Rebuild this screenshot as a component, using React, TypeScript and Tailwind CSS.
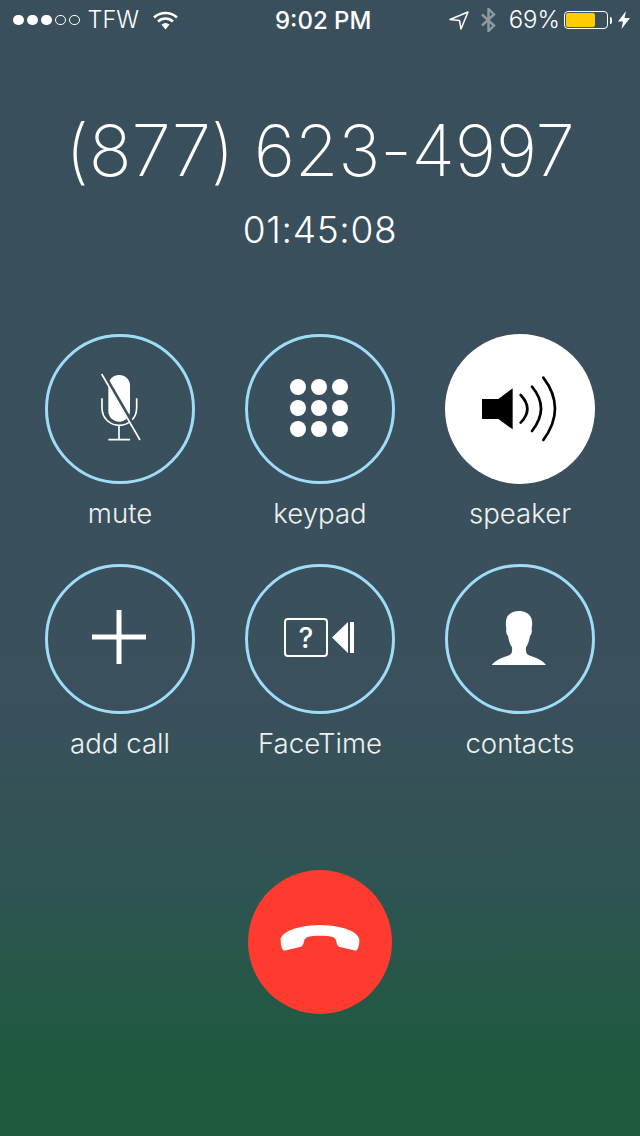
import React from "react";

const font = "font-['Inter','Liberation_Sans',sans-serif]";

const MicIcon = () => (
  <svg className="shrink-0" width="150" height="150" viewBox="15 12 450 450">
    <rect x="205" y="135" width="65" height="140" rx="32" fill="#fff" />
    <path d="M186 205v28c0 32 24 53 52 53s52-21 52-53v-28M237 286v42M205 329h65" fill="none" stroke="#fff" strokeWidth="5" />
    <path d="M190 132L305 330" stroke="#3a4f5c" strokeWidth="12" />
    <path d="M185 132L300 330" stroke="#fff" strokeWidth="5" />
  </svg>
);

const SpeakerIcon = () => (
  <svg className="shrink-0" width="150" height="150" viewBox="15 12 450 450">
    <path d="M126 207H175L218 175V298L175 267H126Z" fill="#000" />
    <path d="M242 195Q282 237 242 278M276 170Q330 235 276 303M310 143Q380 235 310 330" fill="none" stroke="#000" strokeWidth="8" strokeLinecap="round" />
  </svg>
);

const PlusIcon = () => (
  <svg className="mb-[4px] mr-[2px] shrink-0" width="54" height="54" viewBox="0 0 54 54">
    <path d="M0 27H54M27 0V54" stroke="#fff" strokeWidth="5" />
  </svg>
);

const FaceTimeIcon = () => (
  <div className="mb-[3px] mr-[2px] flex items-center gap-[4px]">
    <div className={`flex h-[39px] w-[44px] items-center justify-center rounded-[4px] border-2 border-white text-[28px] font-medium text-white ${font}`}>
      ?
    </div>
    <svg width="22" height="31" viewBox="0 0 22 31">
      <path d="M0 15.5L16 0V31ZM18 0H22V31H18Z" fill="#fff" />
    </svg>
  </div>
);

const ContactIcon = () => (
  <svg className="shrink-0" width="150" height="150" viewBox="15 12 450 450">
    <path
      d="M155 315C168 296 195 292 210 284C216 280 217 272 216 262C210 254 206 240 204 228C198 222 198 212 199 205C197 195 197 185 199 178C203 160 222 153 237 153C252 153 271 160 275 178C277 185 277 195 275 205C276 212 276 222 270 228C268 240 264 254 258 262C257 272 258 280 264 284C279 292 306 296 318 315Z"
      fill="#fff"
    />
  </svg>
);

const Keypad = () => (
  <div className="mb-[2px] mr-[2px] grid grid-cols-3 gap-[5px]">
    {Array.from({ length: 9 }).map((_, i) => (
      <div key={i} className="h-[16px] w-[16px] rounded-full bg-white" />
    ))}
  </div>
);

const CallButton = ({ label, active, children }: { label: string; active?: boolean; children: React.ReactNode }) => (
  <div className="flex flex-col items-center">
    <div
      className={`flex h-[150px] w-[150px] items-center justify-center rounded-full ${
        active ? "bg-white" : "border-[3px] border-[#9fdcf8]"
      }`}
    >
      {children}
    </div>
    <span className="h-[60px] whitespace-nowrap text-[27.6px] font-light leading-[58px] text-[#eef1f2]">{label}</span>
  </div>
);

const StatusBar = () => (
  <div className="relative flex h-[40px] items-center justify-between pl-[13px] pr-[10px] text-white">
    <div className="flex items-center">
      <div className="flex gap-[3.5px]">
        <div className="h-[10.5px] w-[10.5px] rounded-full bg-white" />
        <div className="h-[10.5px] w-[10.5px] rounded-full bg-white" />
        <div className="h-[10.5px] w-[10.5px] rounded-full bg-white" />
        <div className="h-[10.5px] w-[10.5px] rounded-full border border-white" />
        <div className="h-[10.5px] w-[10.5px] rounded-full border border-white" />
      </div>
      <span className="ml-[8px] text-[23.5px] font-light leading-none">TFW</span>
      <svg className="ml-[14px]" width="25" height="19" viewBox="0 0 25 19">
        <path d="M1 6.5C7.5 .5 17.5 .5 24 6.5M5 10.5C9.5 6.5 15.5 6.5 20 10.5" fill="none" stroke="#fff" strokeWidth="2.6" />
        <path d="M8.5 13.5C11 11.5 14 11.5 16.5 13.5L12.5 18.5Z" fill="#fff" />
      </svg>
    </div>
    <span className="absolute left-[275px] top-[7px] text-[24px] font-medium leading-[28px]">9:02 PM</span>
    <div className="flex items-center">
      <svg width="20" height="19" viewBox="0 0 20 19">
        <path d="M1 8.5L19 1L12 18L10.5 9.5Z" fill="none" stroke="#fff" strokeWidth="1.5" strokeLinejoin="round" />
      </svg>
      <svg className="ml-[11px]" width="17" height="24" viewBox="0 0 17 24">
        <path d="M2 6.5L14 17.5L8.5 23V1L14 6.5L2 17.5" fill="none" stroke="#8d9ba3" strokeWidth="2.4" />
      </svg>
      <span className="ml-[12px] text-[24px] font-light leading-none">69%</span>
      <div className="ml-[4px] h-[18px] w-[44px] rounded-[4px] border border-white p-[1px]">
        <div className="h-full w-[29px] rounded-[2px] bg-[#ffcc00]" />
      </div>
      <div className="ml-[2px] h-[7px] w-[2px] rounded-r-full bg-white" />
      <svg className="ml-[6px]" width="12" height="18" viewBox="0 0 12 18">
        <path d="M8 0L0 10.5H5L3.5 18L12 7H6.5Z" fill="#fff" />
      </svg>
    </div>
  </div>
);

export default function App() {
  return (
    <div className={`flex h-[1136px] w-[640px] flex-col overflow-hidden bg-[linear-gradient(180deg,#3a4f5c_0%,#3a505c_62%,#2e5451_79%,#1f5a40_93%,#1f5a3e_100%)] ${font}`}>
      <StatusBar />
      <h1 className="mt-[68px] h-[84px] text-center text-[71px] font-[250] leading-[84px] tracking-[-0.3px] text-white">(877) 623-4997</h1>
      <p className="mt-[16px] h-[44px] text-center text-[37px] font-light leading-[44px] tracking-[0.7px] text-white">01:45:08</p>
      <div className="mt-[82px] grid grid-cols-3 gap-x-[50px] gap-y-[20px] px-[45px]">
        <CallButton label="mute"><MicIcon /></CallButton>
        <CallButton label="keypad"><Keypad /></CallButton>
        <CallButton label="speaker" active><SpeakerIcon /></CallButton>
        <CallButton label="add call"><PlusIcon /></CallButton>
        <CallButton label="FaceTime"><FaceTimeIcon /></CallButton>
        <CallButton label="contacts"><ContactIcon /></CallButton>
      </div>
      <div className="mt-[96px] flex justify-center">
        <div className="flex h-[144px] w-[144px] items-center justify-center rounded-full bg-[#ff3b30]">
          <svg className="shrink-0" width="160" height="155" viewBox="0 0 480 465">
            <path
              d="M122 225C122 205 160 182 240 180C320 182 358 205 358 225C358 240 355 252 348 257L300 246C292 244 290 235 288 225C285 215 270 212 240 212C210 212 197 215 193 225C190 235 190 244 180 246L132 257C125 252 122 240 122 225Z"
              fill="#fff"
            />
          </svg>
        </div>
      </div>
    </div>
  );
}
